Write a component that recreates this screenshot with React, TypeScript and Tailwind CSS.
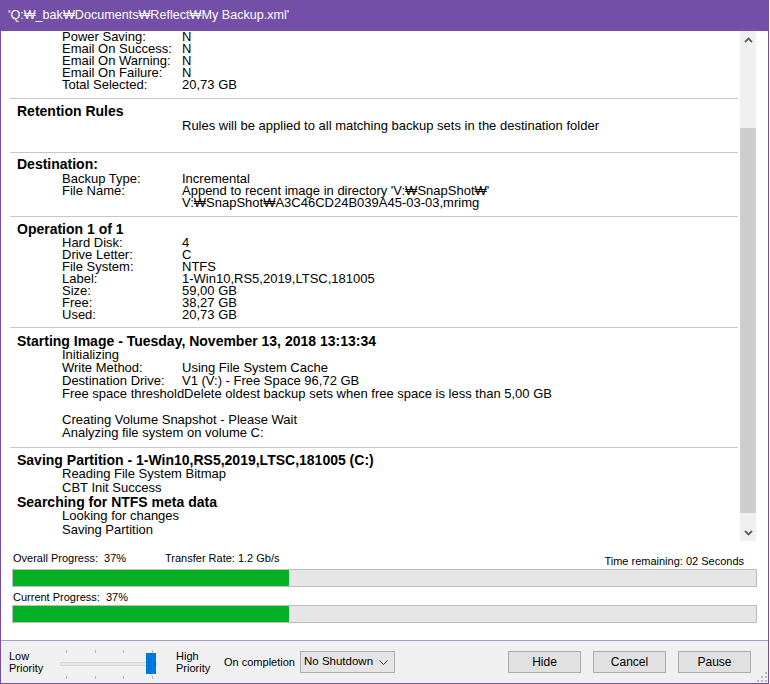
import React from "react";

const log = "font-['Liberation_Sans',Arial,sans-serif] text-[13px] text-black";
const ui = "font-['Liberation_Sans',Arial,sans-serif] text-[11px] text-black";

function Sep() {
  return <div className="ml-[9px] w-[728px] h-px bg-[#c6c6c6]" />;
}

function Row({ k, v }: { k: string; v: string }) {
  return (
    <div className="flex leading-[12px] h-[12px] pl-[61px] whitespace-nowrap">
      <div className="w-[120px] shrink-0">{k}</div>
      <div>{v}</div>
    </div>
  );
}

function Head({ children }: { children: React.ReactNode }) {
  return <div className="pl-[16px] font-bold text-[14px] leading-[14px] h-[14px] whitespace-nowrap">{children}</div>;
}

function Line13({ children }: { children?: React.ReactNode }) {
  return <div className="pl-[61px] leading-[13px] h-[13px] whitespace-nowrap">{children}</div>;
}

function Line14({ children }: { children?: React.ReactNode }) {
  return <div className="pl-[61px] leading-[14px] h-[14px] whitespace-nowrap">{children}</div>;
}

function Caret({ down }: { down?: boolean }) {
  return (
    <svg width="9" height="6" viewBox="0 0 9 6">
      <polyline
        points={down ? "1,1 4.5,4.5 8,1" : "1,5 4.5,1.5 8,5"}
        fill="none"
        stroke="#606060"
        strokeWidth="1.8"
      />
    </svg>
  );
}

function Scrollbar() {
  return (
    <div className="w-[16px] shrink-0 bg-[#f0f0f0] flex flex-col">
      <div className="h-[17px] flex items-center justify-center">
        <Caret />
      </div>
      <div className="h-[80px]" />
      <div className="h-[385px] bg-[#cdcdcd]" />
      <div className="flex-1" />
      <div className="h-[17px] flex items-center justify-center">
        <Caret down />
      </div>
    </div>
  );
}

function Bar() {
  return (
    <div className="h-[18px] border border-[#bcbcbc] bg-[#e6e6e6]">
      <div className="h-full w-[276px] bg-[#06b025]" />
    </div>
  );
}

function Slider() {
  const ticks = [6, 35, 63, 92];
  return (
    <svg width="116" height="42" viewBox="0 0 116 42" className="shrink-0">
      <rect x="0.5" y="21.5" width="96" height="3" fill="#e7e7e7" stroke="#d6d6d6" />
      {ticks.map((x) => (
        <g key={x}>
          <rect x={x} y="9" width="1" height="3" fill="#b8b8b8" />
          <rect x={x} y="35" width="1" height="3" fill="#b8b8b8" />
        </g>
      ))}
      <rect x="86" y="12" width="10" height="21" fill="#0078d7" />
    </svg>
  );
}

function Btn({ label }: { label: string }) {
  return (
    <div className="w-[73px] h-[22px] border border-[#adadad] bg-[#e1e1e1] flex items-center justify-center text-[12px]">
      {label}
    </div>
  );
}

export default function App() {
  return (
    <div className="w-[769px] h-[684px] bg-white border-x border-b border-[#744fa8] flex flex-col relative overflow-hidden">
      <div className="h-[31px] shrink-0 bg-[#744fa8] -mx-px flex items-center pl-[8px] font-['Liberation_Sans',Arial,sans-serif] text-[12.6px] text-white">
        <span className="text-white">'Q:₩_bak₩Documents₩Reflect₩My Backup.xml'</span>
      </div>

      <div className="h-[510px] shrink-0 flex">
        <div className={`w-[739px] shrink-0 overflow-hidden ${log}`}>
          <div>
            <Row k="Power Saving:" v="N" />
            <Row k="Email On Success:" v="N" />
            <Row k="Email On Warning:" v="N" />
            <Row k="Email On Failure:" v="N" />
            <Row k="Total Selected:" v="20,73 GB" />
          </div>
          <div className="h-[7px]" />
          <Sep />
          <div className="pt-[5px] pb-[20px]">
            <Head>Retention Rules</Head>
            <div className="mt-[2px]">
              <Row k="" v="Rules will be applied to all matching backup sets in the destination folder" />
            </div>
          </div>
          <Sep />
          <div className="pt-[4px] pb-[7px]">
            <Head>Destination:</Head>
            <div className="mt-[2px]">
              <Row k="Backup Type:" v="Incremental" />
              <Row k="File Name:" v="Append to recent image in directory 'V:₩SnapShot₩'" />
              <Row k="" v="V:₩SnapShot₩A3C46CD24B039A45-03-03,mrimg" />
            </div>
          </div>
          <Sep />
          <div className="pt-[5px] pb-[6px]">
            <Head>Operation 1 of 1</Head>
            <div className="mt-[1px]">
              <Row k="Hard Disk:" v="4" />
              <Row k="Drive Letter:" v="C" />
              <Row k="File System:" v="NTFS" />
              <Row k="Label:" v="1-Win10,RS5,2019,LTSC,181005" />
              <Row k="Size:" v="59,00 GB" />
              <Row k="Free:" v="38,27 GB" />
              <Row k="Used:" v="20,73 GB" />
            </div>
          </div>
          <Sep />
          <div className="pt-[6px] pb-[8px]">
            <Head>Starting Image - Tuesday, November 13, 2018 13:13:34</Head>
            <Line13>Initializing</Line13>
            <Line13>
              <span className="inline-block w-[120px]">Write Method:</span>Using File System Cache
            </Line13>
            <Line13>
              <span className="inline-block w-[120px]">Destination Drive:</span>V1 (V:) - Free Space 96,72 GB
            </Line13>
            <Line13>Free space thresholdDelete oldest backup sets when free space is less than 5,00 GB</Line13>
            <Line13 />
            <Line13>Creating Volume Snapshot - Please Wait</Line13>
            <Line13>Analyzing file system on volume C:</Line13>
          </div>
          <Sep />
          <div className="pt-[5px]">
            <Head>Saving Partition - 1-Win10,RS5,2019,LTSC,181005 (C:)</Head>
            <Line14>Reading File System Bitmap</Line14>
            <Line14>CBT Init Success</Line14>
            <Head>Searching for NTFS meta data</Head>
            <Line14>Looking for changes</Line14>
            <Line14>Saving Partition</Line14>
          </div>
        </div>
        <Scrollbar />
      </div>

      <div className={`flex-1 px-[11px] pt-[10px] ${ui}`}>
        <div className="flex h-[15px] leading-[15px] pl-[1px]">
          <span className="w-[152px] whitespace-pre">Overall Progress:  37%</span>
          <span>Transfer Rate: 1.2 Gb/s</span>
          <span className="ml-auto mr-[13px] mt-[3px]">Time remaining: 02 Seconds</span>
        </div>
        <div className="mt-[3px]">
          <Bar />
        </div>
        <div className="mt-[3px] h-[15px] leading-[15px] pl-[1px] whitespace-pre">Current Progress:  37%</div>
        <div>
          <Bar />
        </div>
      </div>

      <div className={`h-[43px] shrink-0 border-t border-[#a89cc0] bg-[#f0f0f0] flex items-center ${ui}`}>
        <div className="w-[59px] pl-[8px] leading-[12px] shrink-0">
          <div>Low</div>
          <div>Priority</div>
        </div>
        <Slider />
        <div className="w-[48px] leading-[12px] shrink-0">
          <div>High</div>
          <div>Priority</div>
        </div>
        <div className="w-[76px] shrink-0 whitespace-nowrap">On completion</div>
        <div className="w-[95px] h-[22px] border border-[#adadad] bg-[#e5e5e5] flex items-center pl-[3px] pr-[6px] shrink-0 text-[11.5px]">
          <span>No Shutdown</span>
          <svg width="9" height="5" viewBox="0 0 9 5" className="ml-auto">
            <polyline points="0.5,0.5 4.5,4.5 8.5,0.5" fill="none" stroke="#333" strokeWidth="1" />
          </svg>
        </div>
        <div className="flex-1" />
        <div className="flex gap-[12px] pr-[17px]">
          <Btn label="Hide" />
          <Btn label="Cancel" />
          <Btn label="Pause" />
        </div>
      </div>

      <svg width="10" height="10" viewBox="0 0 10 10" className="absolute right-[1px] bottom-[1px]">
        {[
          [8, 0],
          [8, 4],
          [4, 4],
          [8, 8],
          [4, 8],
          [0, 8],
        ].map(([x, y]) => (
          <rect key={`${x}-${y}`} x={x} y={y} width="2" height="2" fill="#b8b8b8" />
        ))}
      </svg>
    </div>
  );
}
